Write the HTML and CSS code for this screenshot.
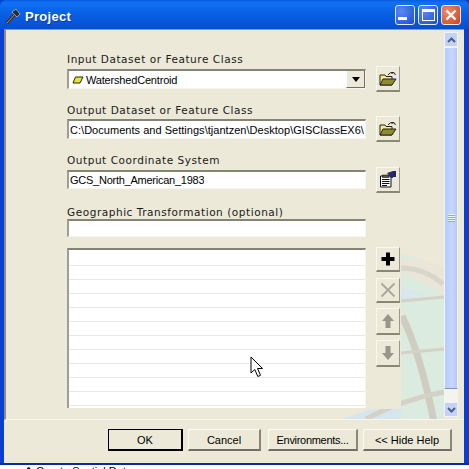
FILE: index.html
```html
<!DOCTYPE html>
<html lang="en">
<head>
<meta charset="utf-8">
<title>Project</title>
<link rel="stylesheet" href="styles.css">
</head>
<body>
<div class="window">
  <header class="titlebar">
    <svg class="app-icon" width="16" height="16" viewBox="0 0 16 16"><path d="M2 15 L10 6" stroke="#3a2a18" stroke-width="3"/><path d="M2 15 L10 6" stroke="#c09a60" stroke-width="1"/><path d="M7 4 L11 1 L15 6 L12 9 Z" fill="#2b2b2b" stroke="#d8d8d8" stroke-width=".6"/></svg>
    <span class="title">Project</span>
    <div class="caption">
      <button class="cap cap-blue"><span class="min-glyph"></span></button>
      <button class="cap cap-blue"><span class="max-glyph"></span></button>
      <button class="cap cap-red"><svg width="14" height="14" viewBox="0 0 14 14"><path d="M2.5 2.5 L11.5 11.5 M11.5 2.5 L2.5 11.5" stroke="#fff" stroke-width="2.4"/></svg></button>
    </div>
  </header>
  <div class="client">
    <div class="panel">
      <div class="content">
        <svg class="globe" width="438" height="387" viewBox="0 0 438 387">
          <path d="M310 387 L438 387 L438 240 Q420 225 395 222 L395 387 Z" fill="#dcebdf"/>
          <path d="M395 240 L438 262 L438 235 Q420 225 395 228 Z" fill="#e9e6d8"/>
          <path d="M335 387 L395 368 L395 387 Z" fill="#d6e6ee"/>
          <path d="M395 255 L420 262 L395 270 Z" fill="#d8e7ec"/>
          <path d="M395 236 Q418 236 437 252" fill="none" stroke="#d8d5ca" stroke-width="5"/>
          <path d="M395 269 L438 265" fill="none" stroke="#d4d1c7" stroke-width="3"/>
          <path d="M396 284 Q414 320 428 390" fill="none" stroke="#cfccc2" stroke-width="7"/>
          <path d="M395 321 L438 317" fill="none" stroke="#d4d1c7" stroke-width="3"/>
          <path d="M360 387 Q395 368 438 360" fill="none" stroke="#d4d1c7" stroke-width="5"/>
        </svg>
        <form class="form">
          <div class="group">
            <label class="label">Input Dataset or Feature Class</label>
            <div class="row">
              <div class="field combo">
                <svg class="layer-icon" width="12" height="8" viewBox="0 0 12 8"><path d="M3.5 1 H11 L8 7 H1 Z" fill="#e8e820" stroke="#222" stroke-width="1"/></svg>
                <span class="text-narrow">WatershedCentroid</span>
                <span class="combo-btn"><span class="down-tri"></span></span>
              </div>
              <button type="button" class="tool">
                <svg width="18" height="16" viewBox="0 0 18 16"><path d="M1 4 H6 L7 5.500 H13 V14 H1 Z" fill="#f5ec80" stroke="#222"/><path d="M1 14 L4 8 H17 L13 14 Z" fill="#8f8a2a" stroke="#222"/><path d="M9 4 Q11 .5 15 1.500 M15 1.500 L16.500 4 M15 1.500 L12.500 2.500" fill="none" stroke="#222"/></svg>
              </button>
            </div>
          </div>
          <div class="group group-second">
            <label class="label">Output Dataset or Feature Class</label>
            <div class="row">
              <div class="field"><span class="clip text-wide">C:\Documents and Settings\tjantzen\Desktop\GISClassEX6\</span></div>
              <button type="button" class="tool">
                <svg width="18" height="16" viewBox="0 0 18 16"><path d="M1 4 H6 L7 5.500 H13 V14 H1 Z" fill="#f5ec80" stroke="#222"/><path d="M1 14 L4 8 H17 L13 14 Z" fill="#8f8a2a" stroke="#222"/><path d="M9 4 Q11 .5 15 1.500 M15 1.500 L16.500 4 M15 1.500 L12.500 2.500" fill="none" stroke="#222"/></svg>
              </button>
            </div>
          </div>
          <div class="group group-third">
            <label class="label">Output Coordinate System</label>
            <div class="row">
              <div class="field field-19"><span class="clip text-narrower">GCS_North_American_1983</span></div>
              <button type="button" class="tool">
                <svg width="18" height="18" viewBox="0 0 18 18"><path d="M1.500 6 H12 V17 H1.500 Z" fill="#fff" stroke="#111"/><path d="M3.500 5 H10 V7.500 H3.500 Z" fill="#555" stroke="#111" stroke-width=".6"/><path d="M3 9.500 H10.500 M3 11.500 H10.500 M3 13.500 H10.500 M3 15.500 H8" stroke="#111"/><path d="M8 3 L14 1 V8 H12 Z" fill="#2a2a6a"/><path d="M14 1 H17 V7 H14 Z" fill="#23235f"/></svg>
              </button>
            </div>
          </div>
          <div class="group group-fourth">
            <label class="label">Geographic Transformation (optional)</label>
            <div class="row">
              <div class="field field-18"></div>
            </div>
          </div>
          <div class="list-row">
            <div class="list"></div>
            <div class="tools">
              <button type="button" class="tool tool-plus">
                <svg width="16" height="16" viewBox="0 0 16 16"><path d="M8 1.500 V14.500 M1.500 8 H14.500" stroke="#000" stroke-width="4"/></svg>
              </button>
              <button type="button" class="tool tool-25">
                <svg width="16" height="16" viewBox="0 0 16 16"><path d="M1.500 1.500 L14.500 14.500 M14.500 1.500 L1.500 14.500" stroke="#a9a79d" stroke-width="1.800"/></svg>
              </button>
              <button type="button" class="tool tool-27">
                <svg width="14" height="16" viewBox="0 0 14 16"><path d="M7 1 L13 8 H9.500 V15 H4.500 V8 H1 Z" fill="#98968c"/></svg>
              </button>
              <button type="button" class="tool tool-27">
                <svg width="14" height="16" viewBox="0 0 14 16"><path d="M7 15 L13 8 H9.500 V1 H4.500 V8 H1 Z" fill="#98968c"/></svg>
              </button>
            </div>
          </div>
        </form>
      </div>
      <div class="scrollbar">
        <div class="sb-btn"><svg width="9" height="6" viewBox="0 0 9 6"><path d="M1 5 L4.500 1.500 L8 5" fill="none" stroke="#4d6185" stroke-width="2"/></svg></div>
        <div class="thumb"><span class="grip"></span></div>
        <div class="sb-track"></div>
        <div class="sb-btn"><svg width="9" height="6" viewBox="0 0 9 6"><path d="M1 1 L4.500 4.500 L8 1" fill="none" stroke="#4d6185" stroke-width="2"/></svg></div>
      </div>
    </div>
    <footer class="footer">
      <button type="button" class="btn btn-ok">OK</button>
      <button type="button" class="btn btn-cancel">Cancel</button>
      <button type="button" class="btn btn-env">Environments...</button>
      <button type="button" class="btn btn-help">&lt;&lt; Hide Help</button>
    </footer>
  </div>
</div>
<div class="behind"><span>✿ Create Spatial Data</span></div>
<svg class="cursor" width="14" height="22" viewBox="0 0 14 22"><path d="M1 1 V17 L4.800 13.500 L7.800 20.500 L10.500 19.300 L7.500 12.500 L12.500 12.500 Z" fill="#fff" stroke="#000"/></svg>
</body>
</html>
```
FILE: styles.css
```css
* { box-sizing: border-box; }
html, body { margin: 0; height: 469px; overflow: hidden; background: #fff; }
body { position: relative; font: 11px/14px "Liberation Sans", Arial, sans-serif; color: #000; }
button { font: inherit; color: inherit; padding: 0; margin: 0; }

.window {
  width: 469px; height: 465px; display: flex; flex-direction: column;
  background: #0a3fd0; border-bottom: 2px solid #0a2aa8;
}
.titlebar {
  height: 29px; flex: none; display: flex; align-items: center; padding: 0 8px 0 5px;
  background: linear-gradient(#0a5be0 0, #0f72f2 10%, #0a62e6 40%, #0757de 75%, #0a4ccb 100%);
  border-radius: 6px 6px 0 0;
}
.app-icon { margin: 2px 4px 0 0; }
.title { color: #fff; font: bold 13px/16px "Liberation Sans", Arial, sans-serif; letter-spacing: .3px; text-shadow: 1px 1px 0 #0a3a9a; padding-top: 4px; }
.caption { margin-left: auto; display: flex; gap: 3px; }
.cap {
  width: 20px; height: 20px; border: 1px solid #e6ecfa; border-radius: 3px;
  display: flex; align-items: center; justify-content: center;
}
.cap-blue { background: radial-gradient(circle at 30% 30%, #5a8af0, #2a5cd8 75%, #1e48c0); }
.cap-red { background: radial-gradient(circle at 30% 30%, #ee8a68, #d85a34 70%, #c44022); }
.min-glyph { width: 9px; height: 3px; background: #fff; margin: 8px 5px 0 0; }
.max-glyph { width: 13px; height: 12px; border: 1px solid #fff; border-top-width: 3px; }

.client {
  flex: 1; min-height: 0; margin: 0 5px 0 4px; background: #ece9d8;
  display: flex; flex-direction: column;
}
.panel {
  height: 391px; flex: none; display: flex; padding: 2px 3px 2px 0;
  border-top: 1px solid #9a978a; border-left: 2px solid #8f8c80; border-bottom: 1px solid #f8f6ee;
}
.content { position: relative; width: 438px; height: 387px; flex: none; overflow: hidden; }
.globe { position: absolute; left: 0; top: 0; }
.form {
  position: relative; width: 395px; height: 377px;
  background: #ece9d8; padding: 20px 0 0 61px;
}
.group-second { margin-top: 14px; }
.group-third { margin-top: 14px; }
.group-fourth { margin-top: 16px; margin-bottom: 11px; }
.label {
  display: block; height: 14px; margin-bottom: 3px; font-family: "DejaVu Sans", sans-serif;
  font-size: 10.500px; letter-spacing: .55px; color: #1a1a1a; white-space: nowrap;
}
.group-second .label { margin-bottom: 2px; }
.group-fourth .label { margin-bottom: 0; }
.row { display: flex; align-items: center; gap: 10px; height: 20px; }
.group-third .row { height: 19px; }
.group-fourth .row { height: 18px; }
.field {
  width: 299px; height: 20px; background: #fff; flex: none; display: flex; align-items: center;
  padding-left: 1px; overflow: hidden; white-space: nowrap;
  border-top: 2px solid #858276; border-left: 2px solid #a09d91;
  border-right: 1px solid #f6f4ec; border-bottom: 1px solid #f6f4ec;
}
.field-19 { height: 19px; }
.field-18 { height: 18px; }
.clip { overflow: hidden; }
.text-narrow { letter-spacing: -.18px; }
.text-narrower { letter-spacing: -.25px; }
.text-wide { letter-spacing: .03px; }
.combo { padding-left: 3px; gap: 2px; position: relative; }
.layer-icon { flex: none; }
.combo-btn {
  margin-left: auto; width: 19px; height: 17px; background: #ece9d8; flex: none;
  display: flex; align-items: center; justify-content: center;
  border-right: 1px solid #716f64; border-bottom: 1px solid #716f64; border-left: 1px solid #fff;
}
.down-tri { width: 0; height: 0; border: 4px solid transparent; border-top: 5px solid #000; border-bottom: 0; }
.tool {
  width: 24px; height: 26px; flex: none; margin: -3px 0; background: #ece9d8;
  display: flex; align-items: center; justify-content: center;
  border: 0; border-top: 1px solid #f8f7f1; border-left: 1px solid #f8f7f1;
  border-right: 1px solid #9b988b; border-bottom: 2px solid #8a8778;
}
.list-row { display: flex; gap: 10px; }
.list {
  width: 299px; height: 160px; flex: none; background-color: #fff;
  border-top: 2px solid #858276; border-left: 2px solid #a09d91; border-right: 1px solid #f6f4ec;
  background-image: repeating-linear-gradient(#fff 0, #fff 13px, #e9e8e2 13px, #e9e8e2 14px);
  background-position: 0 2px;
}
.tools { display: flex; flex-direction: column; gap: 5px; margin-top: -1px; }
.tools .tool { margin: 0; }
.tools .tool-plus { height: 25px; margin-bottom: 1px; }
.tools .tool-25 { height: 25px; }
.tools .tool-27 { height: 27px; }

.scrollbar { width: 14px; flex: none; margin-left: 0; display: flex; flex-direction: column; background: #f4f3ee; }
.sb-btn {
  height: 15px; flex: none; background: #c3d3f8; border: 1px solid #eef3fd;
  display: flex; align-items: center; justify-content: center;
}
.thumb {
  flex: 1; background: linear-gradient(90deg, #b8cdfa, #c6d6fc 60%, #b4c8f6);
  border: 1px solid #f0f4fe; border-bottom-color: #7e96d0; display: flex; align-items: center; justify-content: center;
}
.grip { width: 7px; height: 8px; background: repeating-linear-gradient(#eef3fe 0, #eef3fe 1px, #8ea8e0 1px, #8ea8e0 2px); }
.sb-track { height: 13px; flex: none; }

.footer { flex: 1; position: relative; display: flex; align-items: center; padding: 0 0 3px 104px; }
.btn {
  height: 22px; background: #ece9d8; white-space: nowrap; font-size: 11px;
  border: 0; border-top: 1px solid #fbfaf5; border-left: 1px solid #fbfaf5;
  border-right: 2px solid #8a8778; border-bottom: 2px solid #716f64;
}
.btn-ok { width: 75px; margin-right: 5px; border: 1px solid #000; border-right-width: 2px; border-bottom-width: 2px; }
.btn-cancel { width: 73px; margin-right: 7px; }
.btn-env { width: 90px; margin-right: 5px; letter-spacing: -.3px; }
.btn-help { width: 89px; }

.behind { height: 4px; overflow: hidden; padding-left: 24px; font-size: 11px; line-height: 12px; }
.cursor { position: absolute; left: 250px; top: 356px; }
```
